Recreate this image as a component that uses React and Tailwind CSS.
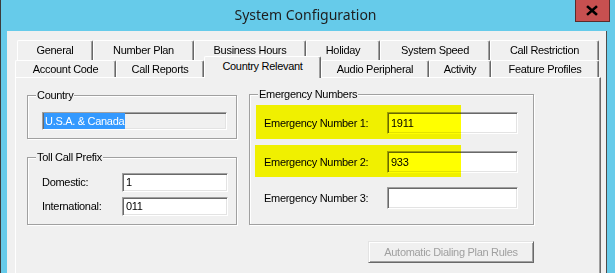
const row1 = [
  ["General", 76],
  ["Number Plan", 101],
  ["Business Hours", 112],
  ["Holiday", 74],
  ["System Speed", 110],
  ["Call Restriction", 109],
];

const row2 = [
  ["Account Code", 101],
  ["Call Reports", 88],
  ["Country Relevant", 117, true],
  ["Audio Peripheral", 108],
  ["Activity", 62],
  ["Feature Profiles", 108],
];

function Tab({ label, width, selected }) {
  return (
    <div
      style={{ width }}
      className={
        "flex shrink-0 items-center justify-center rounded-t-[2px] border-t border-l border-r border-t-white border-l-white border-r-[#696969] bg-[#f0f0f0] shadow-[inset_-1px_0_0_#a0a0a0] " +
        (selected ? "relative z-10 -mt-[4px] h-[22px] pb-[3px]" : "h-full")
      }
    >
      {label}
    </div>
  );
}

function Field({ value, className = "" }) {
  return (
    <div
      className={
        "flex items-center border border-t-[#a0a0a0] border-l-[#a0a0a0] border-b-white border-r-white pl-[3px] shadow-[inset_1px_1px_0_#696969,inset_-1px_-1px_0_#e3e3e3] " +
        className
      }
    >
      {value}
    </div>
  );
}

function Group({ label, className = "", children }) {
  return (
    <div
      className={
        "relative border border-[#a0a0a0] shadow-[inset_1px_1px_0_#fff,1px_1px_0_#fff] " +
        className
      }
    >
      <span className="absolute -top-[7px] left-[8px] bg-[#f0f0f0] px-px leading-[13px]">
        {label}
      </span>
      {children}
    </div>
  );
}

function CloseButton() {
  return (
    <svg width="35" height="22" viewBox="0 0 35 22" className="block">
      <rect x="0.5" y="-1" width="34" height="22.5" fill="#c75050" stroke="#5a2c2c" />
      <path d="M13 7 L21 14 M21 7 L13 14" stroke="#000" strokeWidth="2.6" strokeLinecap="square" />
    </svg>
  );
}

export default function App() {
  return (
    <div className="h-[273px] w-[615px] overflow-hidden border-l border-[#3c3c3c] bg-[#66cbea] font-['Liberation_Sans',Arial,sans-serif] text-[11px] tracking-[-0.3px] text-black">
      {/* title bar */}
      <div className="flex h-[31px] items-start">
        <div className="flex-1" />
        <div className="pt-[5px] font-['Segoe_UI','Noto_Sans',sans-serif] text-[14px] leading-[20px] tracking-normal text-[#1e1e1e]">
          System Configuration
        </div>
        <div className="flex flex-1 justify-end pr-[5px]">
          <CloseButton />
        </div>
      </div>

      {/* client */}
      <div className="ml-[6px] h-[242px] w-[600px] border-r border-[#4d4d4d] bg-[#f0f0f0] pt-[9px] pl-[8px] pr-[5px]">
        <div className="flex h-[20px] pl-[2px]">
          {row1.map(([l, w]) => (
            <Tab key={l} label={l} width={w} />
          ))}
        </div>
        <div className="flex h-[17px]">
          {row2.map(([l, w, s]) => (
            <Tab key={l} label={l} width={w} selected={s} />
          ))}
        </div>

        <div className="flex h-[200px] w-[586px] border-t border-l border-r border-t-white border-l-white border-r-[#696969] pt-[16px] pl-[11px] shadow-[inset_-1px_0_0_#a0a0a0]">
          {/* left column */}
          <div className="mt-px flex w-[210px] flex-col">
            <Group label="Country" className="h-[44px] pt-[16px] pl-[14px]">
              <Field
                className="h-[18px] w-[185px] !pl-[1px]"
                value={<span className="bg-[#3399ff] px-px text-white">U.S.A. &amp; Canada</span>}
              />
            </Group>
            <Group label="Toll Call Prefix" className="mt-[18px] flex h-[68px] flex-col gap-[5px] pt-[15px] pl-[14px]">
              <div className="flex items-center">
                <span className="w-[80px]">Domestic:</span>
                <Field value="1" className="h-[19px] w-[106px] bg-white" />
              </div>
              <div className="flex items-center">
                <span className="w-[80px]">International:</span>
                <Field value="011" className="h-[19px] w-[106px] bg-white" />
              </div>
            </Group>
          </div>

          {/* right column */}
          <div className="ml-[12px] flex w-[285px] flex-col">
            <Group label="Emergency Numbers" className="h-[131px] pt-[17px] pl-[14px]">
              <div className="flex items-center">
                <span className="w-[123px]">Emergency Number 1:</span>
                <Field value="1911" className="h-[22px] w-[131px] bg-white" />
              </div>
              <div className="mt-[17px] flex items-center">
                <span className="w-[123px]">Emergency Number 2:</span>
                <Field value="933" className="h-[22px] w-[131px] bg-white" />
              </div>
              <div className="mt-[14px] flex items-center">
                <span className="w-[123px]">Emergency Number 3:</span>
                <Field value="" className="h-[22px] w-[131px] bg-white" />
              </div>
              <div className="absolute top-[10px] left-[6px] h-[34px] w-[205px] bg-[#ffff00] mix-blend-multiply" />
              <div className="absolute top-[50px] left-[5px] h-[32px] w-[206px] bg-[#ffff00] mix-blend-multiply" />
            </Group>
            <div className="mt-[16px] flex h-[22px] w-[166px] items-center justify-center self-end border border-t-[#e3e3e3] border-l-[#e3e3e3] border-b-[#696969] border-r-[#696969] text-[#a0a0a0] shadow-[inset_1px_1px_0_#fff,inset_-1px_-1px_0_#a0a0a0]">
              Automatic Dialing Plan Rules
            </div>
          </div>
        </div>
      </div>
    </div>
  );
}
